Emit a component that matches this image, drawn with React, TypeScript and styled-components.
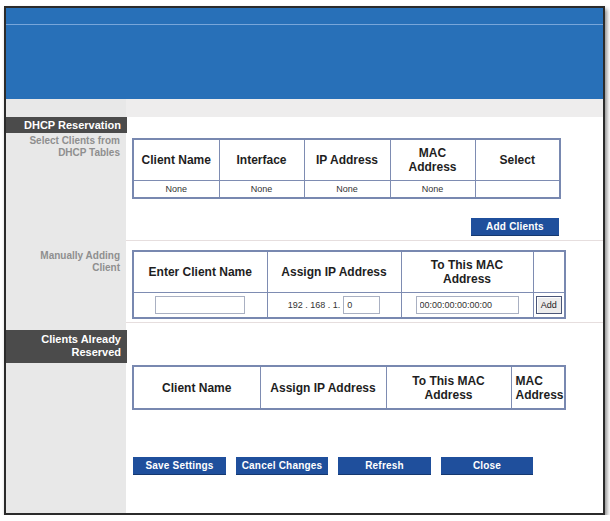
import React from "react";
import styled, { createGlobalStyle } from "styled-components";

const Global = createGlobalStyle`
  html, body { margin: 0; padding: 0; background: #ffffff; }
  body { font-family: "Liberation Sans", Arial, sans-serif; }
`;

const Page = styled.div`
  padding: 6px 0 0 4px;
`;

const Frame = styled.div`
  width: 601px;
  height: 509px;
  box-sizing: border-box;
  border: 2px solid #2b2b2b;
  background: #ffffff;
  display: flex;
  flex-direction: column;
  box-shadow: 2px 3px 4px rgba(0, 0, 0, 0.45);
`;

const Header = styled.div`
  height: 91px;
  flex: none;
  background: #2870b8;
  display: flex;
  flex-direction: column;
`;

const HeaderLine = styled.div`
  margin-top: 16px;
  height: 1px;
  background: #78a6da;
`;

const Strip = styled.div`
  height: 18px;
  flex: none;
  display: grid;
  grid-template-columns: 120px 1fr;
  background: #eeeded;
`;

const Section = styled.div<{ $h?: number }>`
  display: grid;
  grid-template-columns: 120px 1fr;
  ${(p) => (p.$h ? `height: ${p.$h}px; flex: none;` : "flex: 1;")}
`;

const Side = styled.div`
  background: #e8e8e8;
  display: flex;
  flex-direction: column;
  align-items: stretch;
`;

const Main = styled.div<{ $top: number; $line?: boolean }>`
  padding: ${(p) => p.$top}px 0 0 6px;
  display: flex;
  flex-direction: column;
  align-items: flex-start;
  box-sizing: border-box;
  ${(p) => (p.$line ? "border-bottom: 1px solid #e6dede;" : "")}
`;

const DarkLabel = styled.div<{ $top: number; $h: number }>`
  margin-top: ${(p) => p.$top}px;
  height: ${(p) => p.$h}px;
  background: #4b4b4b;
  color: #ffffff;
  font-weight: bold;
  font-size: 11px;
  line-height: 13px;
  text-align: right;
  padding: ${(p) => (p.$h > 20 ? "3px 6px 0 0" : "2px 6px 0 0")};
  box-sizing: border-box;
  margin-right: -1px;
`;

const GrayText = styled.div<{ $top: number }>`
  margin-top: ${(p) => p.$top}px;
  color: #8f8f8f;
  font-weight: bold;
  font-size: 10px;
  line-height: 12px;
  text-align: right;
  padding-right: 6px;
`;

const Table = styled.table<{ $w: number }>`
  width: ${(p) => p.$w}px;
  border-collapse: collapse;
  table-layout: fixed;
  border: 2px solid #7888b0;
`;

const Th = styled.th<{ $h: number; $left?: boolean }>`
  height: ${(p) => p.$h}px;
  border: 1px solid #7e8cb2;
  font-size: 12px;
  font-weight: bold;
  line-height: 14px;
  color: #1e1e1e;
  text-align: ${(p) => (p.$left ? "left" : "center")};
  padding: ${(p) => (p.$left ? "0 0 0 4px" : "0 2px")};
  vertical-align: middle;
`;

const Td = styled.td<{ $h: number }>`
  height: ${(p) => p.$h}px;
  border: 1px solid #7e8cb2;
  font-size: 9px;
  color: #333333;
  text-align: center;
  padding: 0;
  vertical-align: middle;
`;

const CellRow = styled.div`
  display: flex;
  align-items: center;
  justify-content: center;
  gap: 3px;
  font-size: 9px;
  color: #333;
`;

const Field = styled.input<{ $w: number }>`
  width: ${(p) => p.$w}px;
  height: 18px;
  box-sizing: border-box;
  border: 1px solid #a9b0c2;
  background: #ffffff;
  font-family: "Liberation Sans", Arial, sans-serif;
  font-size: 9px;
  color: #333;
  padding: 0 3px;
  margin: 0;
  outline: none;
`;

const SmallButton = styled.button`
  width: 26px;
  height: 18px;
  box-sizing: border-box;
  border: 1px solid #4a5678;
  background: #ececec;
  font-family: "Liberation Sans", Arial, sans-serif;
  font-size: 9px;
  color: #222;
  padding: 0;
  box-shadow: inset 1px 1px 0 #fff;
`;

const BlueButton = styled.button<{ $w: number }>`
  width: ${(p) => p.$w}px;
  height: 18px;
  box-sizing: border-box;
  border: none;
  border-bottom: 1px solid #15386f;
  background: #1f4f9c;
  color: #ffffff;
  font-family: "Liberation Sans", Arial, sans-serif;
  font-weight: bold;
  font-size: 10px;
  letter-spacing: 0.2px;
  padding: 0;
`;

const RightRow = styled.div<{ $w: number; $top: number }>`
  width: ${(p) => p.$w}px;
  margin-top: ${(p) => p.$top}px;
  display: flex;
  justify-content: flex-end;
`;

const ButtonBar = styled.div`
  margin-top: 47px;
  margin-left: 1px;
  display: flex;
  gap: 10px;
`;

export default function App() {
  return (
    <>
      <Global />
      <Page>
        <Frame>
          <Header>
            <HeaderLine />
          </Header>
          <Strip>
            <Side />
            <div />
          </Strip>

          <Section $h={124}>
            <Side>
              <DarkLabel $top={0} $h={16}>DHCP Reservation</DarkLabel>
              <GrayText $top={2}>
                Select Clients from
                <br />
                DHCP Tables
              </GrayText>
            </Side>
            <Main $top={21} $line>
              <Table $w={427}>
                <colgroup>
                  <col style={{ width: 86 }} />
                  <col style={{ width: 85 }} />
                  <col style={{ width: 86 }} />
                  <col style={{ width: 85 }} />
                  <col style={{ width: 85 }} />
                </colgroup>
                <thead>
                  <tr>
                    <Th $h={40}>Client Name</Th>
                    <Th $h={40}>Interface</Th>
                    <Th $h={40}>IP Address</Th>
                    <Th $h={40}>
                      MAC
                      <br />
                      Address
                    </Th>
                    <Th $h={40}>Select</Th>
                  </tr>
                </thead>
                <tbody>
                  <tr>
                    <Td $h={16}>None</Td>
                    <Td $h={16}>None</Td>
                    <Td $h={16}>None</Td>
                    <Td $h={16}>None</Td>
                    <Td $h={16} />
                  </tr>
                </tbody>
              </Table>
              <RightRow $w={427} $top={19}>
                <BlueButton $w={88}>Add Clients</BlueButton>
              </RightRow>
            </Main>
          </Section>

          <Section $h={82}>
            <Side>
              <GrayText $top={9}>
                Manually Adding
                <br />
                Client
              </GrayText>
            </Side>
            <Main $top={9} $line>
              <Table $w={432}>
                <colgroup>
                  <col style={{ width: 134 }} />
                  <col style={{ width: 134 }} />
                  <col style={{ width: 132 }} />
                  <col style={{ width: 32 }} />
                </colgroup>
                <thead>
                  <tr>
                    <Th $h={40}>Enter Client Name</Th>
                    <Th $h={40}>Assign IP Address</Th>
                    <Th $h={40}>
                      To This MAC
                      <br />
                      Address
                    </Th>
                    <Th $h={40} />
                  </tr>
                </thead>
                <tbody>
                  <tr>
                    <Td $h={24}>
                      <CellRow>
                        <Field $w={90} defaultValue="" />
                      </CellRow>
                    </Td>
                    <Td $h={24}>
                      <CellRow>
                        <span>192 . 168 . 1.</span>
                        <Field $w={37} defaultValue="0" />
                      </CellRow>
                    </Td>
                    <Td $h={24}>
                      <CellRow>
                        <Field $w={103} defaultValue="00:00:00:00:00:00" />
                      </CellRow>
                    </Td>
                    <Td $h={24}>
                      <CellRow>
                        <SmallButton>Add</SmallButton>
                      </CellRow>
                    </Td>
                  </tr>
                </tbody>
              </Table>
            </Main>
          </Section>

          <Section>
            <Side>
              <DarkLabel $top={7} $h={33}>
                Clients Already
                <br />
                Reserved
              </DarkLabel>
            </Side>
            <Main $top={42}>
              <Table $w={432}>
                <colgroup>
                  <col style={{ width: 127 }} />
                  <col style={{ width: 126 }} />
                  <col style={{ width: 125 }} />
                  <col style={{ width: 54 }} />
                </colgroup>
                <thead>
                  <tr>
                    <Th $h={41}>Client Name</Th>
                    <Th $h={41}>Assign IP Address</Th>
                    <Th $h={41}>
                      To This MAC
                      <br />
                      Address
                    </Th>
                    <Th $h={41} $left>
                      MAC
                      <br />
                      Address
                    </Th>
                  </tr>
                </thead>
              </Table>
              <ButtonBar>
                <BlueButton $w={93}>Save Settings</BlueButton>
                <BlueButton $w={92}>Cancel Changes</BlueButton>
                <BlueButton $w={93}>Refresh</BlueButton>
                <BlueButton $w={92}>Close</BlueButton>
              </ButtonBar>
            </Main>
          </Section>
        </Frame>
      </Page>
    </>
  );
}
